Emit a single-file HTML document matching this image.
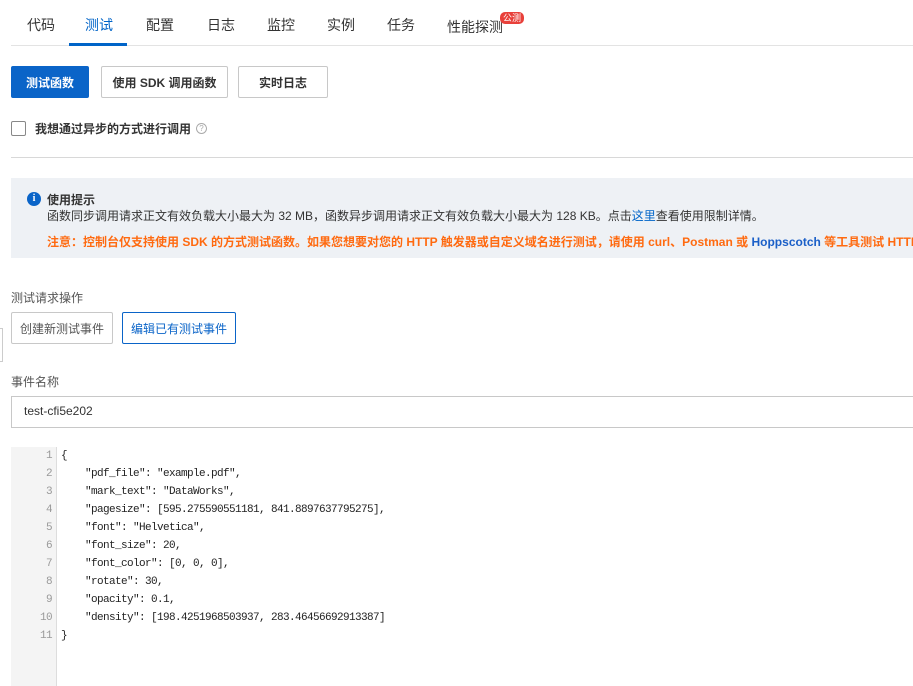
<!DOCTYPE html>
<html><head><meta charset="utf-8"><style>
*{margin:0;padding:0;box-sizing:border-box}
body{width:913px;height:686px;overflow:hidden;background:#fff;font-family:"Liberation Sans","Noto Sans CJK SC",sans-serif;color:#333;position:relative}
.a{position:absolute;white-space:nowrap}
.tab{position:absolute;top:15px;font-size:14px;color:#333}
.btn{position:absolute;height:32px;border:1px solid #c8c8c8;font-size:12px;font-weight:bold;display:flex;align-items:center;justify-content:center;border-radius:2px;color:#333}
.code{position:absolute;left:61px;font-family:"Liberation Mono",monospace;font-size:11px;letter-spacing:-0.6px;color:#222;white-space:pre;line-height:18px}
.ln{position:absolute;right:0;width:46px;text-align:right;padding-right:4px;font-family:"Liberation Mono",monospace;font-size:11px;letter-spacing:-0.6px;color:#999;line-height:18px}
</style></head><body>
<div class="tab" style="left:27px">代码</div>
<div class="tab" style="left:85px;color:#0064c8">测试</div>
<div class="tab" style="left:146px">配置</div>
<div class="tab" style="left:207px">日志</div>
<div class="tab" style="left:267px">监控</div>
<div class="tab" style="left:327px">实例</div>
<div class="tab" style="left:387px">任务</div>
<div class="tab" style="left:447px;top:17px">性能探测</div>
<div class="a" style="left:500px;top:12px;height:12px;padding:0 3px;background:#e8403a;color:#fff;font-size:9px;line-height:12px;border-radius:5px">公测</div>
<div class="a" style="left:11px;top:45px;width:902px;height:1px;background:#e3e3e3"></div>
<div class="a" style="left:69px;top:43px;width:58px;height:3px;background:#0064c8"></div>

<div class="btn" style="left:11px;top:66px;width:78px;background:#0a64c8;border-color:#0a64c8;color:#fff">测试函数</div>
<div class="btn" style="left:101px;top:66px;width:127px">使用 SDK 调用函数</div>
<div class="btn" style="left:238px;top:66px;width:90px">实时日志</div>

<div class="a" style="left:11px;top:121px;width:15px;height:15px;border:1px solid #888;border-radius:2px"></div>
<div class="a" style="left:35px;top:120px;font-size:12px;font-weight:bold">我想通过异步的方式进行调用</div>
<div class="a" style="left:196px;top:123px;width:11px;height:11px;border:1px solid #aaa;border-radius:50%;font-size:8px;line-height:9px;text-align:center;color:#aaa">?</div>
<div class="a" style="left:11px;top:157px;width:902px;height:1px;background:#d8d8d8"></div>

<div class="a" style="left:11px;top:178px;width:902px;height:80px;background:#eef1f5;overflow:hidden">
<div class="a" style="left:16px;top:14px;width:14px;height:14px;border-radius:50%;background:#0a64c8;color:#fff;font-size:10px;font-weight:bold;line-height:14px;text-align:center;font-family:'Liberation Serif',serif">i</div>
<div class="a" style="left:36px;top:13px;font-size:12px;font-weight:bold">使用提示</div>
<div class="a" style="left:36px;top:29px;font-size:12px">函数同步调用请求正文有效负载大小最大为 32 MB，函数异步调用请求正文有效负载大小最大为 128 KB。点击<span style="color:#0064c8">这里</span>查看使用限制详情。</div>
<div class="a" style="left:36px;top:55px;font-size:12px;font-weight:bold;color:#ff6a10">注意：控制台仅支持使用 SDK 的方式测试函数。如果您想要对您的 HTTP 触发器或自定义域名进行测试，请使用 curl、Postman 或 <span style="color:#1a5fc8">Hoppscotch</span> 等工具测试 HTTP 触发器。</div>
</div>

<div class="a" style="left:11px;top:289px;font-size:12px;color:#555">测试请求操作</div>
<div class="btn" style="left:11px;top:312px;width:102px;height:32px;font-weight:normal;color:#555">创建新测试事件</div>
<div class="btn" style="left:122px;top:312px;width:114px;height:32px;font-weight:normal;border-color:#0a64c8;color:#0a64c8">编辑已有测试事件</div>
<div class="a" style="left:0;top:328px;width:3px;height:34px;border:1px solid #ccc;border-left:none"></div>

<div class="a" style="left:11px;top:373px;font-size:12px;color:#555">事件名称</div>
<div class="a" style="left:11px;top:396px;width:910px;height:32px;border:1px solid #c8c8c8"></div>
<div class="a" style="left:24px;top:404px;font-size:12px;color:#333">test-cfi5e202</div>

<div class="a" style="left:11px;top:447px;width:46px;height:239px;background:#f4f4f4;border-right:1px solid #ddd">
<div class="ln" style="top:0">1<br>2<br>3<br>4<br>5<br>6<br>7<br>8<br>9<br>10<br>11</div>
</div>
<div class="code" style="top:447px">{
    "pdf_file": "example.pdf",
    "mark_text": "DataWorks",
    "pagesize": [595.275590551181, 841.8897637795275],
    "font": "Helvetica",
    "font_size": 20,
    "font_color": [0, 0, 0],
    "rotate": 30,
    "opacity": 0.1,
    "density": [198.4251968503937, 283.46456692913387]
}</div>
</body></html>
